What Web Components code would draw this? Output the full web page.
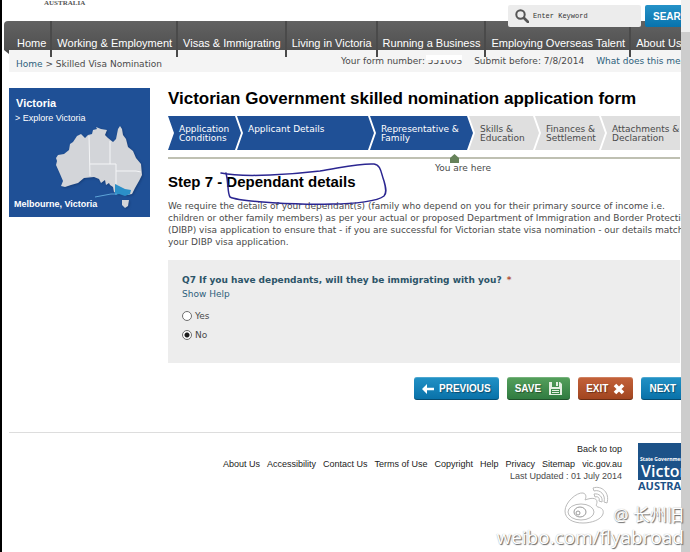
<!DOCTYPE html>
<html lang="en">
<head>
<meta charset="utf-8">
<title>Skilled Visa Nomination</title>
<style>
    html, body {
        height: 100%;
        margin: 0;
        background: #fff;
    }
    body {
        overflow: hidden;
        font: 9px/12px "DejaVu Sans", Verdana, sans-serif;
        color: #4a4a4a;
    }
</style>
</head>
<body>

<app-window>
    <site-header slot="header"></site-header>
    <crumb-bar></crumb-bar>
    <page-columns>
        <region-card slot="side"></region-card>
        <page-title>Victorian Government skilled nomination application form</page-title>
        <step-bar>
            <step-item done style="flex-basis: 62px">Application<br>Conditions</step-item>
            <step-item done style="flex-basis: 126px">Applicant Details</step-item>
            <step-item done style="flex-basis: 92px">Representative &amp;<br>Family</step-item>
            <step-item style="flex-basis: 59px">Skills &amp;<br>Education</step-item>
            <step-item style="flex-basis: 59px">Finances &amp;<br>Settlement</step-item>
            <step-item style="flex-basis: 90px">Attachments &amp;<br>Declaration</step-item>
        </step-bar>
        <step-intro>
            <span slot="heading">Step 7 - Dependant details</span>
            We require the details of your dependant(s) (family who depend on you for their primary source of income i.e.<br>
            children or other family members) as per your actual or proposed Department of Immigration and Border Protection<br>
            (DIBP) visa application to ensure that - if you are successful for Victorian state visa nomination - our details match<br>
            your DIBP visa application.
        </step-intro>
        <radio-question value="No">Q7 If you have dependants, will they be immigrating with you?</radio-question>
        <form-actions>
            <action-button icon="back">PREVIOUS</action-button>
            <action-button icon="save" color="green">SAVE</action-button>
            <action-button icon="exit" color="red">EXIT</action-button>
            <action-button icon="next">NEXT</action-button>
        </form-actions>
    </page-columns>
    <site-footer></site-footer>
</app-window>
<photo-mark></photo-mark>

<script>
/**
 * Base class: every element renders a static template in an open shadow root
 */
class BaseElement extends HTMLElement {
    constructor() {
        super()
        this.attachShadow({ mode: 'open' })
        this.shadowRoot.innerHTML = this.render()
    }

    render() {
        return '<slot></slot>'
    }
}

class AppWindow extends BaseElement {
    render() {
        return `
            <style>
                :host {
                    display: flex;
                    height: 100%;
                }
                .edge {
                    flex: 0 0 2px;
                    background: #000;
                }
                .view {
                    flex: 1;
                    min-width: 0;
                    overflow: hidden;
                    padding-left: 2px;
                }
                .page {
                    padding-left: 5px;
                }
                .scroll {
                    display: flex;
                    flex: 0 0 9px;
                    flex-direction: column;
                    background: #cdcdcd;
                }
                .scroll::before {
                    content: "";
                    height: 32px;
                    background: #efefef;
                }
            </style>
            <div class="edge"></div>
            <div class="view">
                <slot name="header"></slot>
                <div class="page"><slot></slot></div>
            </div>
            <div class="scroll"></div>
        `
    }
}

class SiteHeader extends BaseElement {
    render() {
        const items = ['Home', 'Working & Employment', 'Visas & Immigrating', 'Living in Victoria',
            'Running a Business', 'Employing Overseas Talent', 'About Us']
        return `
            <style>
                :host {
                    display: block;
                    font-family: "Liberation Sans", Arial, sans-serif;
                }
                .top {
                    display: flex;
                    justify-content: space-between;
                    align-items: flex-start;
                    height: 21px;
                    padding-left: 40px;
                }
                .brand {
                    font: bold 7px/7px "Liberation Serif", serif;
                    color: #555;
                }
                form {
                    display: flex;
                    gap: 4px;
                    margin: 5px -11px 0 0;
                    position: relative;
                    z-index: 1;
                }
                label {
                    display: flex;
                    align-items: center;
                    gap: 4px;
                    width: 126px;
                    height: 22px;
                    padding-left: 7px;
                    border-radius: 2px;
                    background: #ececec;
                }
                input {
                    width: 90px;
                    padding: 0;
                    border: 0;
                    background: none;
                    font: 7px "Liberation Mono", monospace;
                    color: #333;
                }
                input::placeholder {
                    color: #333;
                }
                form button {
                    height: 22px;
                    padding: 0 0 0 8px;
                    width: 47px;
                    border: 0;
                    border-radius: 2px;
                    background: linear-gradient(#2592c8, #0873ad);
                    color: #fff;
                    font: bold 10px "Liberation Sans", Arial, sans-serif;
                    text-align: left;
                }
                nav {
                    height: 29px;
                    border-radius: 4px 0 0 0;
                    background: linear-gradient(#626262, #505050);
                }
                nav::after {
                    content: "";
                    display: block;
                    width: 5px;
                    height: 4px;
                    background: #484848;
                    clip-path: polygon(0 0, 100% 0, 100% 100%);
                }
                ul {
                    display: flex;
                    height: 29px;
                    margin: 0;
                    padding: 0 0 0 8px;
                    list-style: none;
                }
                li {
                    display: flex;
                    flex: none;
                    align-items: flex-end;
                    height: 36px;
                    box-sizing: border-box;
                    padding: 0 4px 8px 5px;
                    border-right: 2px solid #4a4a4a;
                }
                li:last-child {
                    border: 0;
                }
                a {
                    color: #fff;
                    font-size: 11px;
                    line-height: 12px;
                    text-decoration: none;
                    white-space: nowrap;
                }
            </style>
            <div class="top">
                <span class="brand">AUSTRALIA</span>
                <form onsubmit="return false">
                    <label>
                        <svg width="14" height="14" viewBox="0 0 14 14" fill="none" stroke="#555">
                            <circle cx="5.5" cy="5.5" r="4.2" stroke-width="2"/>
                            <path d="M9 9l4 4" stroke-width="2.6" stroke-linecap="round"/>
                        </svg>
                        <input type="text" placeholder="Enter Keyword" aria-label="Enter Keyword">
                    </label>
                    <button>SEARCH</button>
                </form>
            </div>
            <nav>
                <ul>${items.map(item => `<li><a href="#">${item.replace('&', '&amp;')}</a></li>`).join('')}</ul>
            </nav>
        `
    }
}

class CrumbBar extends BaseElement {
    render() {
        return `
            <style>
                :host {
                    display: flex;
                    justify-content: space-between;
                    height: 22px;
                    background: #f4f4f4;
                    white-space: nowrap;
                }
                a {
                    color: #2d5f7c;
                    text-decoration: none;
                }
                .path {
                    padding: 8px 0 0 7px;
                }
                .status {
                    display: flex;
                    flex: none;
                    gap: 12px;
                    width: 340px;
                    padding-top: 5px;
                }
                .number {
                    position: relative;
                }
                /* hides the upper half of the form number */
                .number::after {
                    content: "";
                    position: absolute;
                    right: 0;
                    top: 0;
                    width: 36px;
                    height: 5px;
                    background: #fff;
                }
            </style>
            <div class="path"><a href="#">Home</a> &gt; Skilled Visa Nomination</div>
            <div class="status">
                <span class="number">Your form number: 551003</span>
                <span>Submit before: 7/8/2014</span>
                <a href="#">What does this mean?</a>
            </div>
        `
    }
}

class PageColumns extends BaseElement {
    render() {
        return `
            <style>
                :host {
                    display: flex;
                    align-items: flex-start;
                    gap: 18px;
                    padding-top: 16px;
                }
                .main {
                    flex: 1;
                    min-width: 0;
                }
            </style>
            <slot name="side"></slot>
            <div class="main"><slot></slot></div>
        `
    }
}

class RegionCard extends BaseElement {
    render() {
        return `
            <style>
                :host {
                    display: flex;
                    flex: 0 0 141px;
                    flex-direction: column;
                    box-sizing: border-box;
                    height: 129px;
                    padding: 9px 0 7px 5px;
                    background: #1f5096;
                    color: #fff;
                    font-family: "Liberation Sans", Arial, sans-serif;
                }
                h2 {
                    margin: 0 0 3px 2px;
                    font-size: 11px;
                    line-height: 12px;
                }
                a {
                    margin-left: 1px;
                    color: #fff;
                    text-decoration: none;
                }
                svg {
                    margin: 2px 0 -14px 35px;
                }
                .land {
                    filter: drop-shadow(1px 1px 1px #163d78);
                }
                strong {
                    line-height: 12px;
                    margin-top: auto;
                    position: relative;
                }
            </style>
            <h2>Victoria</h2>
            <a href="#">&gt; Explore Victoria</a>
            <svg width="96" height="84" viewBox="0 0 96 84">
                <g class="land" fill="#d3d5d9">
                    <path d="M7 32L9 29 15 28 20 24 21 18 24 16 28 10 32 8 36 12 39 9 43 8 44 4 48 3 47 1 52 3 58 4 56 9 59 12 64 16 67 13 69 3 71 0 73 3 74 9 77 13 79 21 84 25 87 32 92 38 93 49 90 55 86 62 83 68 78 69 73 68 69 68 65 66 64 61 61 59 60 57 57 59 56 54 52 57 50 53 45 51 35 52 29 57 22 59 16 61 12 60 14 55 11 48 7 39 8 35z"/>
                    <path d="M73 74L80 74 79 80 76 82 73 79z"/>
                </g>
                <path fill="none" stroke="#f4f5f7" d="M40 10L41 50M61 15V38M41 38H67V58M67 45H87L92 46"/>
                <path fill="#2b8fc8" d="M66 58L70 60 76 63 82 64 81 68 76 70 70 68 66 69z"/>
                <path fill="none" stroke="#5da4d8" d="M46 71L62 68H68"/>
            </svg>
            <strong>Melbourne, Victoria</strong>
        `
    }
}

class PageTitle extends BaseElement {
    render() {
        return `
            <style>
                h1 {
                    margin: 0 0 7px;
                    font: bold 17px/21px "Liberation Sans", Arial, sans-serif;
                    color: #000;
                    white-space: nowrap;
                }
            </style>
            <h1><slot></slot></h1>
        `
    }
}

class StepBar extends BaseElement {
    render() {
        return `
            <style>
                :host {
                    display: block;
                }
                .steps {
                    display: flex;
                    gap: 3px;
                    height: 34px;
                    overflow: hidden;
                    margin-right: 1px;
                }
                .rule {
                    height: 2px;
                    margin: 7px 1px 0 0;
                    background: #bfc0b2;
                }
                .here {
                    display: flex;
                    flex-direction: column;
                    align-items: center;
                    width: 60px;
                    margin: -5px 0 0 265px;
                    line-height: 10px;
                    white-space: nowrap;
                }
                .here::before {
                    content: "";
                    align-self: flex-start;
                    width: 9px;
                    height: 9px;
                    margin-left: 17px;
                    background: #66825a;
                    clip-path: polygon(50% 0, 100% 45%, 100% 100%, 0 100%, 0 45%);
                }
            </style>
            <div class="steps"><slot></slot></div>
            <div class="rule"></div>
            <div class="here">You are here</div>
        `
    }
}

class StepItem extends BaseElement {
    render() {
        return `
            <style>
                :host {
                    display: block;
                    flex: none;
                    padding: 9px 0 0 11px;
                    margin-right: -7px;
                    background: #dfdfdf;
                    color: #4a4a4a;
                    line-height: 9px;
                    white-space: nowrap;
                    clip-path: polygon(0 0, calc(100% - 6px) 0, 100% 50%, calc(100% - 6px) 100%, 0 100%, 6px 50%);
                }
                :host([done]) {
                    background: #1f5096;
                    color: #fff;
                }
            </style>
            <slot></slot>
        `
    }
}

class StepIntro extends BaseElement {
    render() {
        return `
            <style>
                :host {
                    display: block;
                    position: relative;
                }
                h2 {
                    margin: 0 0 9px;
                    font: bold 15px/18px "Liberation Sans", Arial, sans-serif;
                    color: #000;
                }
                p {
                    margin: 0;
                    white-space: nowrap;
                }
                svg {
                    position: absolute;
                    left: 52px;
                    top: -12px;
                    pointer-events: none;
                }
            </style>
            <h2><slot name="heading"></slot></h2>
            <p><slot></slot></p>
            <svg width="170" height="48" viewBox="0 0 170 48" fill="none" stroke="#2b2691" stroke-width="1.5" stroke-linecap="round">
                <path d="M1 12C25 17 75 13 100 10 120 7 140 2 154 3 161 4 161 12 164 20 166 27 167 32 164 35 158 40 135 43 112 43 80 44 20 41 10 36 7 31 9 23 6 12"/>
            </svg>
        `
    }
}

class RadioQuestion extends BaseElement {
    render() {
        return `
            <style>
                :host {
                    display: block;
                    margin: 12px 1px 0 0;
                    padding: 14px 14px 22px;
                    background: #ededed;
                }
                fieldset {
                    display: flex;
                    flex-direction: column;
                    align-items: flex-start;
                    min-width: 0;
                    margin: 0;
                    padding: 0;
                    border: 0;
                }
                legend {
                    padding: 0;
                    font-weight: bold;
                    color: #2c5468;
                    line-height: 13px;
                }
                .required {
                    color: #b0543c;
                    margin-left: 2px;
                }
                a {
                    margin: 1px 0 10px;
                    color: #2d5f7c;
                    text-decoration: none;
                }
                label {
                    display: flex;
                    align-items: center;
                    gap: 3px;
                    margin-bottom: 7px;
                }
                label:last-child {
                    margin: 0;
                }
                input {
                    appearance: none;
                    box-sizing: border-box;
                    width: 10px;
                    height: 10px;
                    margin: 0;
                    border: 1px solid #6e6e6e;
                    border-radius: 50%;
                    background: #fff;
                }
                input:checked {
                    background: radial-gradient(circle, #1c1c1c 2px, #fff 3px);
                }
            </style>
            <fieldset>
                <legend><slot></slot> <span class="required">*</span></legend>
                <a href="#">Show Help</a>
                <label><input type="radio" name="answer" value="Yes">Yes</label>
                <label><input type="radio" name="answer" value="No">No</label>
            </fieldset>
        `
    }

    connectedCallback() {
        const input = this.shadowRoot.querySelector(`input[value="${this.getAttribute('value')}"]`)
        if (input) input.checked = true
    }
}

class FormActions extends BaseElement {
    render() {
        return `
            <style>
                :host {
                    display: flex;
                    gap: 8px;
                    margin: 14px 0 32px 246px;
                }
            </style>
            <slot></slot>
        `
    }
}

const ICONS = {
    back: '<svg width="12" height="10" viewBox="0 0 12 10"><path d="M5 0v3.8h7v2.4H5V10L0 5z" fill="#fff"/></svg>',
    next: '<svg width="12" height="10" viewBox="0 0 12 10"><path d="M7 0v3.8H0v2.4h7V10l5-5z" fill="#fff"/></svg>',
    save: '<svg width="13" height="13" viewBox="0 0 13 13"><path fill="#e4efe2" fill-rule="evenodd" d="M0 0h3v5h7V0h1l2 2v11H0zM2 7v5h9V7zM7 0h2v4H7z"/><path d="M3 8.5h7M3 10.5h7" stroke="#e4efe2"/></svg>',
    exit: '<svg width="12" height="12" viewBox="0 0 12 12"><path d="M2 2l8 8M10 2l-8 8" stroke="#fff" stroke-width="3.6"/></svg>'
}

class ActionButton extends BaseElement {
    render() {
        return `
            <style>
                :host {
                    display: block;
                    flex: none;
                }
                button {
                    display: flex;
                    align-items: center;
                    gap: 5px;
                    height: 23px;
                    padding: 0 8px;
                    border: 0;
                    border-radius: 3px;
                    background: linear-gradient(#2292c6, #0870a8);
                    box-shadow: inset 0 -1px #0005, inset 0 1px #fff3;
                    color: #fff;
                    font: bold 10px "Liberation Sans", Arial, sans-serif;
                    text-shadow: 1px 1px 1px #0006;
                }
                :host([color="green"]) button {
                    gap: 8px;
                    background: linear-gradient(#55a05c, #2f7a40);
                }
                :host([color="red"]) button {
                    background: linear-gradient(#c4623a, #a0441f);
                }
            </style>
            <button type="button"><slot></slot></button>
        `
    }

    connectedCallback() {
        const icon = this.getAttribute('icon')
        const button = this.shadowRoot.querySelector('button')
        button.insertAdjacentHTML(icon === 'back' ? 'afterbegin' : 'beforeend', ICONS[icon])
    }
}

class SiteFooter extends BaseElement {
    render() {
        const links = ['About Us', 'Accessibility', 'Contact Us', 'Terms of Use', 'Copyright', 'Help',
            'Privacy', 'Sitemap', 'vic.gov.au']
        return `
            <style>
                :host {
                    display: flex;
                    justify-content: flex-end;
                    gap: 16px;
                    padding-top: 10px;
                    border-top: 1px solid #ddd;
                    font-family: "Liberation Sans", Arial, sans-serif;
                    white-space: nowrap;
                }
                .info {
                    display: flex;
                    flex-direction: column;
                    align-items: flex-end;
                }
                a {
                    color: #222;
                    text-decoration: none;
                }
                nav {
                    display: flex;
                    gap: 7px;
                    margin-top: 3px;
                }
                .logo {
                    width: 43px;
                    overflow: hidden;
                    color: #1c5288;
                    font: bold 11px/11px "Open Sans", sans-serif;
                }
                .box {
                    display: flex;
                    flex-direction: column;
                    justify-content: flex-end;
                    height: 37px;
                    background: #1c5288;
                    color: #fff;
                }
                .small {
                    font: bold 5px/6px "Open Sans", sans-serif;
                    padding-left: 2px;
                }
                .big {
                    font: 600 16px/18px "Open Sans", sans-serif;
                    padding-left: 3px;
                }
            </style>
            <div class="info">
                <a href="#">Back to top</a>
                <nav>${links.map(link => `<a href="#">${link}</a>`).join('')}</nav>
                <span>Last Updated : 01 July 2014</span>
            </div>
            <div class="logo">
                <div class="box">
                    <span class="small">State Government</span>
                    <span class="big">Victoria</span>
                </div>
                AUSTRALIA
            </div>
        `
    }
}

/**
 * Embossed mark that floats over the bottom right corner
 */
class PhotoMark extends BaseElement {
    render() {
        return `
            <style>
                :host {
                    position: absolute;
                    right: 6px;
                    bottom: 3px;
                    display: flex;
                    flex-direction: column;
                    align-items: flex-end;
                    color: #fff;
                    font: 19px/24px "Open Sans", "Noto Sans CJK SC", sans-serif;
                    text-shadow: 1px 1px 1px #666, 0 0 1px #aaa;
                    white-space: nowrap;
                    pointer-events: none;
                }
                .user {
                    display: flex;
                    align-items: flex-end;
                    gap: 4px;
                    font-size: 17px;
                    line-height: 20px;
                }
            </style>
            <div class="user">
                <svg width="46" height="40" viewBox="0 0 46 40" fill="#fff" stroke="#bbb">
                    <path d="M2 26C2 17 14 7 20 8c4 1 3 5 2 7 5-2 12-3 12 2 0 2-2 4 1 5 4 1 6 3 5 7-2 6-12 9-20 9C10 38 2 34 2 26z"/>
                    <ellipse cx="18" cy="27" rx="13" ry="8"/>
                    <ellipse cx="17" cy="27" rx="6" ry="5" stroke="#999"/>
                    <circle cx="15" cy="28" r="2" stroke="#999"/>
                    <path d="M30 3C39 0 47 8 44 18l-3-1C43 10 37 4 31 6zM31 9c5-1 9 3 8 8l-3-1c1-3-1-5-4-4z"/>
                </svg>
                <span>@ 长州旧</span>
            </div>
            <span>weibo.com/flyabroad</span>
        `
    }
}

customElements.define('app-window', AppWindow)
customElements.define('site-header', SiteHeader)
customElements.define('crumb-bar', CrumbBar)
customElements.define('page-columns', PageColumns)
customElements.define('region-card', RegionCard)
customElements.define('page-title', PageTitle)
customElements.define('step-bar', StepBar)
customElements.define('step-item', StepItem)
customElements.define('step-intro', StepIntro)
customElements.define('radio-question', RadioQuestion)
customElements.define('form-actions', FormActions)
customElements.define('action-button', ActionButton)
customElements.define('site-footer', SiteFooter)
customElements.define('photo-mark', PhotoMark)
</script>
</body>
</html>
